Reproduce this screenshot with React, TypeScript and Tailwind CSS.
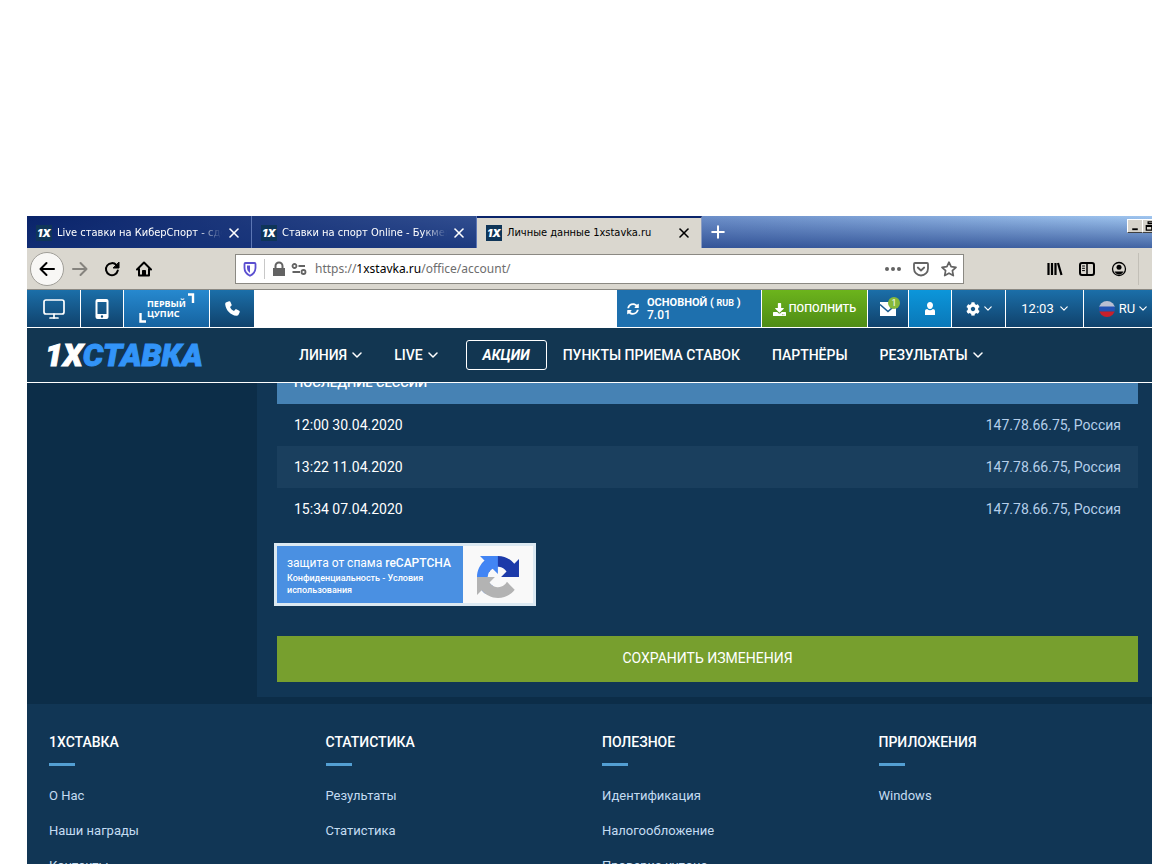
import type { ReactNode } from 'react'
import { FaCog, FaDownload, FaSyncAlt } from 'react-icons/fa'
import { Monitor, Plus, X } from 'lucide-react'

const tabs = [
  { title: 'Live ставки на КиберСпорт - сделать', active: false },
  { title: 'Ставки на спорт Online - Букмекер', active: false },
  { title: 'Личные данные 1xstavka.ru', active: true },
]

const sessions = [
  { date: '12:00 30.04.2020', place: '147.78.66.75, Россия' },
  { date: '13:22 11.04.2020', place: '147.78.66.75, Россия' },
  { date: '15:34 07.04.2020', place: '147.78.66.75, Россия' },
]

const footerColumns = [
  { title: '1ХСТАВКА', links: ['О Нас', 'Наши награды', 'Контакты'] },
  { title: 'СТАТИСТИКА', links: ['Результаты', 'Статистика'] },
  { title: 'ПОЛЕЗНОЕ', links: ['Идентификация', 'Налогообложение', 'Проверка купона'] },
  { title: 'ПРИЛОЖЕНИЯ', links: ['Windows'] },
]

function Chevron({ className = 'h-[6px] w-[10px]' }: { className?: string }) {
  return (
    <svg viewBox="0 0 10 6" className={`shrink-0 ${className}`} fill="none" stroke="currentColor" strokeWidth="1.5" strokeLinecap="round" strokeLinejoin="round">
      <path d="m1 1 4 4 4-4" />
    </svg>
  )
}

function Favicon() {
  return (
    <span className="flex h-4 w-4 shrink-0 items-center justify-center bg-[#0f3558] font-[Inter,sans-serif] text-[11px] leading-4 font-black text-white italic">
      1X
    </span>
  )
}

function BrowserTabs() {
  return (
    <div className="flex h-8 bg-[linear-gradient(to_bottom,rgba(26,58,130,0)_0%,rgba(26,58,130,0.7)_100%),linear-gradient(to_right,#0a246a_0%,#6688c4_55%,#a0c6f0_100%)]">
      {tabs.map((tab) => (
        <div
          key={tab.title}
          className={`flex w-[225px] shrink-0 items-center border-r pl-[9px] ${
            tab.active
              ? 'border-t-2 border-t-[#0a246a] border-r-[#8a9cc0] bg-[#dad7cf] text-black'
              : 'border-r-[#5c76b4] bg-[#0a246a]/40 pt-[2px] text-white'
          }`}
        >
          <Favicon />
          <span
            className={`ml-[5px] w-[165px] overflow-hidden text-[11px] whitespace-nowrap ${
              tab.active ? '' : '[mask-image:linear-gradient(to_right,black_85%,transparent)]'
            }`}
          >
            {tab.title}
          </span>
          <button type="button" aria-label="Закрыть вкладку" className="ml-1">
            <X className="h-4 w-4" strokeWidth={2.4} />
          </button>
        </div>
      ))}
      <button type="button" aria-label="Новая вкладка" className="ml-[6px] text-white">
        <Plus className="h-5 w-5" strokeWidth={2.4} />
      </button>
      <div className="ml-auto flex pt-[3px]">
        <WindowButton label="Свернуть">
          <path d="M4 10h6" strokeWidth="2" />
        </WindowButton>
        <WindowButton label="Развернуть">
          <path d="M5 2h6v2H5zM3 6h6v5H3z M3 7h6" strokeWidth="1.4" />
        </WindowButton>
      </div>
    </div>
  )
}

function WindowButton({ label, children }: { label: string; children: ReactNode }) {
  return (
    <button
      type="button"
      aria-label={label}
      className="-mr-px h-[14px] w-4 shrink-0 border border-t-white border-r-[#404040] border-b-[#404040] border-l-white bg-[#d6d3cb] last:-mr-[6px]"
    >
      <svg viewBox="0 0 14 13" className="h-3 w-[14px]" fill="none" stroke="black">
        {children}
      </svg>
    </button>
  )
}

function ToolButton({ label, className = '', children }: { label: string; className?: string; children: ReactNode }) {
  return (
    <button type="button" aria-label={label} className={`flex h-8 w-8 shrink-0 items-center justify-center ${className}`}>
      <svg viewBox="0 0 16 16" className="h-4 w-4" fill="none" stroke="currentColor" strokeWidth="2" strokeLinecap="round" strokeLinejoin="round">
        {children}
      </svg>
    </button>
  )
}

function BrowserToolbar() {
  return (
    <div className="flex h-[42px] items-center border-b border-[#8b8983] bg-[#dad7cf] pl-[3px] text-black">
      <ToolButton label="Назад" className="h-[34px] w-[34px] rounded-full border border-[#a09e98] bg-[#f8f7f5]">
        <path d="M15 8H1.5M7.5 2 1.5 8l6 6" />
      </ToolButton>
      <ToolButton label="Вперёд" className="text-[#85837e]">
        <path d="M1 8h13.5M8.500 2l6 6-6 6" />
      </ToolButton>
      <ToolButton label="Обновить">
        <path d="M12.500 4.200A6 6 0 1 0 13.800 9.500" />
        <path d="M15 1.500v5.500H9.500z" fill="currentColor" strokeWidth="1" />
      </ToolButton>
      <ToolButton label="Домой">
        <path d="M1 8.500 8 1.500l7 7M3 8v6.500h10V8" />
        <path d="M6.500 14V9.500h3V14" fill="currentColor" strokeWidth="1" />
      </ToolButton>

      <div className="ml-[75px] flex h-[30px] flex-1 items-center border border-[#8b8983] bg-white pr-[6px] pl-[6px] text-[#6d6d6d]">
        <svg viewBox="0 0 16 16" className="h-4 w-4 shrink-0" fill="none" stroke="#5b4fd0" strokeWidth="1.800">
          <path d="M3.500 2h9a1 1 0 0 1 1 1v4c0 3.500-2 6-5.500 7.800C4.500 13 2.500 10.500 2.500 7V3a1 1 0 0 1 1-1z" />
          <path d="M8 4.500v7.500c-2-1.400-3-3-3-5.200V4.500z" fill="#5b4fd0" stroke="none" />
        </svg>
        <span className="mx-[6px] h-5 w-px bg-[#c8c8c8]" />
        <svg viewBox="0 0 16 16" className="h-4 w-4 shrink-0" fill="#636363">
          <path d="M3.500 7V5a4.500 4.500 0 0 1 9 0v2H14v8H2V7zM5.500 7h5V5a2.500 2.500 0 0 0-5 0z" />
        </svg>
        <svg viewBox="0 0 16 16" className="ml-1 h-4 w-4 shrink-0" fill="none" stroke="#636363" strokeWidth="1.800">
          <circle cx="3.500" cy="5" r="2" />
          <path d="M7.500 5H14M1.500 11H9" />
          <circle cx="12.500" cy="11" r="2" />
        </svg>
        <div className="ml-2 flex-1 pt-px font-['Noto_Sans',sans-serif] text-[12px]">
          https://<span className="text-black">1xstavka.ru</span>/office/account/
        </div>
        <button type="button" aria-label="Действия на странице">
          <svg viewBox="0 0 18 16" className="h-4 w-[18px]" fill="#636363">
            <circle cx="3" cy="8" r="2" />
            <circle cx="9" cy="8" r="2" />
            <circle cx="15" cy="8" r="2" />
          </svg>
        </button>
        <button type="button" aria-label="Сохранить в Pocket" className="ml-[11px]">
          <svg viewBox="0 0 16 16" className="h-4 w-4" fill="none" stroke="#636363" strokeWidth="1.800" strokeLinecap="round" strokeLinejoin="round">
            <path d="M2 2h12a1 1 0 0 1 1 1v4.500a7 7 0 0 1-14 0V3a1 1 0 0 1 1-1z" />
            <path d="m4.800 6.500 3.200 3 3.200-3" />
          </svg>
        </button>
        <button type="button" aria-label="Добавить в закладки" className="ml-3">
          <svg viewBox="0 0 16 16" className="h-4 w-4" fill="none" stroke="#636363" strokeWidth="1.700" strokeLinejoin="round">
            <path d="m8 1.200 2.100 4.500 4.900.600-3.600 3.400.900 4.900L8 12.200l-4.300 2.400.900-4.900L1 6.300l4.900-.600z" />
          </svg>
        </button>
      </div>

      <ToolButton label="Библиотека" className="ml-[75px]">
        <path d="M1.500 2v12M5 2v12M8.500 2v12M11 2l3.500 12" strokeWidth="2.200" strokeLinecap="butt" />
      </ToolButton>
      <ToolButton label="Боковая панель">
        <rect x="1" y="2" width="14" height="12" rx="2" />
        <path d="M8 2v12" strokeWidth="1.500" />
        <path d="M3.500 5h2M3.500 7.300h2M3.500 9.600h2" strokeWidth="1" />
      </ToolButton>
      <ToolButton label="Аккаунт">
        <circle cx="8" cy="8" r="6.500" strokeWidth="1.300" />
        <circle cx="8" cy="6.200" r="2.500" fill="currentColor" stroke="none" />
        <path d="M3.500 10.500h9C11.500 12.500 10 13.500 8 13.500s-3.500-1-4.500-3z" fill="currentColor" stroke="none" />
      </ToolButton>
      <span className="mr-[13px] ml-[3px] h-8 w-px bg-[#c2bfb7]" />
    </div>
  )
}

const barItem = 'flex items-center justify-center bg-linear-to-b from-[#1b6fa9] to-[#10426c]'

function TopBar() {
  return (
    <div className="flex h-[38px] gap-px border-b border-white bg-white text-white">
      <a href="#desktop" aria-label="Компьютер" className={`w-[53px] ${barItem}`}>
        <Monitor className="h-6 w-6" strokeWidth={1.7} />
      </a>
      <a href="#mobile" aria-label="Телефон" className={`w-[42px] ${barItem}`}>
        <svg viewBox="0 0 14 20" className="h-5 w-[14px]">
          <path fill="white" fillRule="evenodd" d="M2.500 0h9A2 2 0 0 1 13.500 2v16a2 2 0 0 1-2 2h-9a2 2 0 0 1-2-2V2a2 2 0 0 1 2-2zM2.500 3v12h9V3zM7 16.300a1.200 1.200 0 1 0 0 2.400 1.200 1.200 0 0 0 0-2.400z" />
        </svg>
      </a>
      <a
        href="#cupis"
        className="relative flex w-[85px] flex-col justify-center bg-linear-to-b from-[#2789cf] to-[#1563a0] pl-[23px] font-['Noto_Sans',sans-serif] text-[9px] leading-[10px] font-bold"
      >
        <span>ПЕРВЫЙ</span>
        <span>ЦУПИС</span>
        <svg viewBox="0 0 85 37" className="absolute inset-0 h-full w-full" fill="none" stroke="white" strokeWidth="2.400">
          <path d="M64 4.500h5V13M16.500 23v8.500H22" />
        </svg>
      </a>
      <a href="#phone" aria-label="Позвонить" className={`w-11 ${barItem}`}>
        <svg viewBox="0 0 14 14" className="h-[15px] w-[15px]" fill="white">
          <path d="M3.800.3 1.300 1.200C.5 1.500.1 2.200.2 3.200c.6 5.300 5 9.900 10.400 10.600 1 .1 1.800-.3 2.100-1.100l1-2.300c.2-.5 0-1-.4-1.200l-2.700-1.400c-.4-.2-.9-.1-1.200.3l-1 1.200C6.700 8.500 5.400 7.200 4.700 5.500l1.200-1c.3-.3.4-.7.3-1.100L5 .8C4.800.3 4.300.1 3.800.3z" />
        </svg>
      </a>
      <div className="-mx-px flex-1" />
      <div className="flex w-36 items-center bg-[#1e70ae] pl-[10px]">
        <button type="button" aria-label="Обновить баланс">
          <FaSyncAlt className="h-3 w-3" />
        </button>
        <div className="ml-2 text-[11px] leading-3 font-medium">
          <div className="font-bold">
            ОСНОВНОЙ ( <span className="text-[9px]">RUB</span> )
          </div>
          <div className="text-[12px]">7.01</div>
        </div>
      </div>
      <button type="button" className="flex w-[105px] items-center justify-center gap-[3px] bg-linear-to-b from-[#6cb41c] to-[#4f8c16] pt-px text-[11px] font-medium">
        <FaDownload className="h-[13px] w-[13px]" />
        ПОПОЛНИТЬ
      </button>
      <a href="#mail" aria-label="Сообщения" className={`relative w-10 ${barItem}`}>
        <svg viewBox="0 0 18 14" className="h-[14px] w-[18px]">
          <path fill="white" d="M1 0h16v14H1z" />
          <path d="m1 2.500 8 7 8-7" fill="none" stroke="#1a5c90" strokeWidth="1.600" />
        </svg>
        <span className="absolute top-[7px] right-[8px] h-3 w-3 rounded-full bg-[#86b93a] text-center text-[9px] leading-3">1</span>
      </a>
      <a href="#account" aria-label="Личный кабинет" className="flex w-[42px] items-center justify-center bg-linear-to-b from-[#0c96da] to-[#0a78b8]">
        <svg viewBox="0 0 12 13" className="h-[13px] w-3" fill="white">
          <path d="M6 0C4.200 0 3 1.300 3 3.200 3 5 4 7 6 7s3-2 3-3.800C9 1.300 7.800 0 6 0zM1 13V9c0-1.300 1-2 2.200-2C4 7.800 5 8.200 6 8.200S8 7.800 8.800 7C10 7 11 7.700 11 9v4z" />
        </svg>
      </a>
      <button type="button" aria-label="Настройки" className={`w-[53px] gap-1 ${barItem}`}>
        <FaCog className="h-[14px] w-[14px]" />
        <Chevron className="h-[5px] w-[8px]" />
      </button>
      <button type="button" className={`w-[77px] gap-[6px] text-[13px] ${barItem}`}>
        12:03
        <Chevron className="h-[5px] w-[8px]" />
      </button>
      <button type="button" className={`w-[68px] gap-1 pl-[10px] text-[13px] ${barItem}`}>
        <svg viewBox="0 0 16 16" className="h-4 w-4 shrink-0">
          <clipPath id="flag">
            <circle cx="8" cy="8" r="8" />
          </clipPath>
          <g clipPath="url(#flag)">
            <path fill="#b9bfd2" d="M0 0h16v6H0z" />
            <path fill="#2252b4" d="M0 5.500h16v5H0z" />
            <path fill="#c8202c" d="M0 10.500h16V16H0z" />
          </g>
        </svg>
        RU
        <Chevron className="h-[5px] w-[8px]" />
      </button>
    </div>
  )
}

function SiteHeader() {
  return (
    <header className="relative z-10 flex h-[55px] items-center border-b border-white bg-[#123651] text-white">
      <a href="#home" className="ml-[18px] w-[238px] shrink-0 text-[32px] leading-8 font-black italic [-webkit-text-stroke:1px]">
        1X<span className="text-[#3294f8]">СТАВКА</span>
      </a>
      <nav className="flex items-center text-[14px] font-medium whitespace-nowrap">
        <a href="#line" className="flex items-center gap-[5px] px-4">
          ЛИНИЯ <Chevron />
        </a>
        <a href="#live" className="flex items-center gap-[5px] px-4">
          LIVE <Chevron />
        </a>
        <a href="#promo" className="ml-3 flex h-[30px] w-[81px] items-center justify-center rounded-[3px] border border-white font-bold italic">
          АКЦИИ
        </a>
        <a href="#points" className="px-4">ПУНКТЫ ПРИЕМА СТАВОК</a>
        <a href="#partners" className="px-4">ПАРТНЁРЫ</a>
        <a href="#results" className="flex items-center gap-[5px] px-4">
          РЕЗУЛЬТАТЫ <Chevron />
        </a>
      </nav>
    </header>
  )
}

function Recaptcha() {
  return (
    <div className="mt-4 flex h-[57px] w-64 ring-3 ring-[#dce9f2]">
      <div className="w-[186px] bg-[#4a90e2] pt-2 pl-[10px] text-white">
        <div className="text-[12px] leading-[18px] whitespace-nowrap">
          защита от спама <b className="font-medium">reCAPTCHA</b>
        </div>
        <div className="text-[9px] leading-3 font-medium">
          <a href="#privacy">Конфиденциальность</a> - <a href="#terms">Условия использования</a>
        </div>
      </div>
      <div className="flex flex-1 items-center justify-center bg-[#f9f9f9] pt-1">
        <svg viewBox="0 0 64 64" className="h-[42px] w-[42px]">
          <path fill="#1c3aa9" d="M64 31.955l-.033-1.370V4.687l-7.160 7.160C50.948 4.674 42.033.093 32.050.093c-10.400 0-19.622 4.960-25.458 12.640l11.736 11.860a15.550 15.550 0 0 1 4.754-5.334c2.050-1.600 4.952-2.906 8.968-2.906.485 0 .860.057 1.135.163 4.976.393 9.288 3.140 11.828 7.124l-8.307 8.307L64 31.953" />
          <path fill="#4285f4" d="M31.862.094l-1.370.033H4.594l7.160 7.160C4.580 13.147 0 22.060 0 32.046c0 10.400 4.960 19.622 12.640 25.458L24.500 45.768a15.550 15.550 0 0 1-5.334-4.754c-1.600-2.050-2.906-4.952-2.906-8.968 0-.485.057-.860.163-1.135.393-4.976 3.140-9.288 7.124-11.828l8.307 8.307L31.860.095" />
          <path fill="#b3b3b3" d="M.001 32.045l.033 1.370v25.898l7.160-7.160c5.860 7.173 14.774 11.754 24.760 11.754 10.400 0 19.622-4.960 25.458-12.640l-11.736-11.860a15.550 15.550 0 0 1-4.754 5.334c-2.050 1.600-4.952 2.906-8.968 2.906-.485 0-.860-.057-1.135-.163-4.976-.393-9.288-3.140-11.828-7.124l8.307-8.307c-10.522.040-22.400.066-27.295-.005" />
        </svg>
      </div>
    </div>
  )
}

export default function App() {
  return (
    <div className="h-screen overflow-hidden bg-white pt-[216px] pl-[27px] font-[Roboto,sans-serif]">
      <div className="font-['DejaVu_Sans_Condensed','DejaVu_Sans',sans-serif]">
        <BrowserTabs />
        <BrowserToolbar />
      </div>
      <TopBar />
      <SiteHeader />

      <div className="flex bg-[#0c2d48] pb-[7px]">
        <aside className="w-[230px] shrink-0" />
        <main className="flex-1 bg-[#113655] pr-[14px] pb-[15px] pl-5">
          <table className="-mt-[21px] w-full text-[14px]">
            <thead>
              <tr className="h-[42px] bg-[#4682b4] text-left text-[13px] text-white">
                <th colSpan={2} className="px-[17px] font-medium">ПОСЛЕДНИЕ СЕССИИ</th>
              </tr>
            </thead>
            <tbody>
              {sessions.map((session) => (
                <tr key={session.date} className="h-[42px] even:bg-[#1a3f5e]">
                  <td className="px-[17px] text-white">{session.date}</td>
                  <td className="px-[17px] text-right text-[#b5cfea]">{session.place}</td>
                </tr>
              ))}
            </tbody>
          </table>
          <Recaptcha />
          <button type="button" className="mt-[33px] h-[46px] w-full bg-[#779f2e] pb-px text-[14px] text-white">
            СОХРАНИТЬ ИЗМЕНЕНИЯ
          </button>
        </main>
      </div>

      <footer className="-mr-[3px] grid grid-cols-4 bg-[#113655] pt-7 pl-[22px]">
        {footerColumns.map((column) => (
          <div key={column.title}>
            <h3 className="text-[14px] leading-5 font-medium text-white">{column.title}</h3>
            <div className="mt-[11px] h-[3px] w-[26px] bg-[#539fd3]" />
            <ul className="mt-[12px] text-[13px] leading-[35px] text-[#c4dcf2]">
              {column.links.map((link) => (
                <li key={link}>
                  <a href="#footer">{link}</a>
                </li>
              ))}
            </ul>
          </div>
        ))}
      </footer>
    </div>
  )
}
